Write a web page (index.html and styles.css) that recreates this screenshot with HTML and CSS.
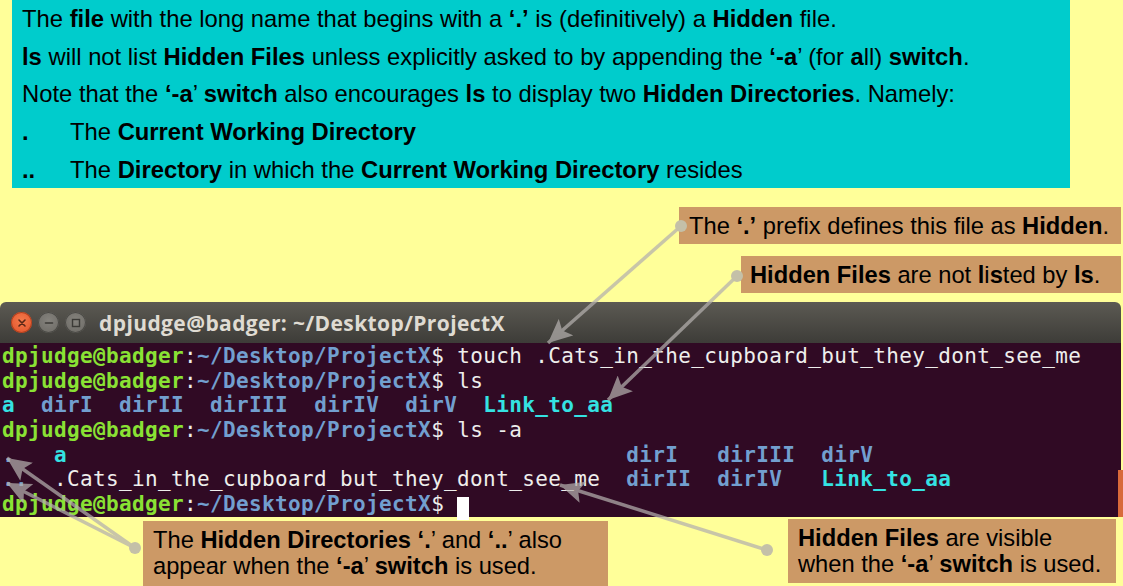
FILE: index.html
```html
<!DOCTYPE html>
<html>
<head>
<meta charset="utf-8">
<link rel="stylesheet" href="styles.css">
</head>
<body>
<div class="page">
  <section class="notes">
    <p>The <b>file</b> with the long name that begins with a <b>‘.’</b> is (definitively) a <b>Hidden</b> file.</p>
    <p><b>ls</b> will not list <b>Hidden Files</b> unless explicitly asked to by appending the <b>‘-a</b>’ (for <b>a</b>ll) <b>switch</b>.</p>
    <p>Note that the <b>‘-a</b>’ <b>switch</b> also encourages <b>ls</b> to display two <b>Hidden Directories</b>. Namely:</p>
    <p class="item"><b class="mark">.</b><span>The <b>Current Working Directory</b></span></p>
    <p class="item"><b class="mark">..</b><span>The <b>Directory</b> in which the <b>Current Working Directory</b> resides</span></p>
  </section>

  <div class="top-callouts">
    <div class="callout c1">The <b>‘.’</b> prefix defines this file as <b>Hidden</b>.</div>
    <div class="callout c2"><b>Hidden Files</b> are not <b>l</b>i<b>s</b>ted by <b>ls</b>.</div>
  </div>

  <div class="terminal">
    <div class="titlebar">
      <div class="buttons">
        <span class="btn close"><svg width="10" height="10" viewBox="0 0 10 10"><path d="M2 2L8 8M8 2L2 8" stroke="#5a2616" stroke-width="1.6" stroke-linecap="round"/></svg></span>
        <span class="btn"><svg width="10" height="10" viewBox="0 0 10 10"><path d="M1.5 5H8.5" stroke="#3b3a36" stroke-width="1.6" stroke-linecap="round"/></svg></span>
        <span class="btn"><svg width="10" height="10" viewBox="0 0 10 10"><rect x="1.5" y="1.5" width="7" height="7" fill="none" stroke="#3b3a36" stroke-width="1.4"/></svg></span>
      </div>
      <div class="title">dpjudge@badger: ~/Desktop/ProjectX</div>
    </div>
    <div class="screen">
      <div class="ln"><span class="u">dpjudge@badger</span>:<span class="d">~/Desktop/ProjectX</span>$ touch .Cats_in_the_cupboard_but_they_dont_see_me</div>
      <div class="ln"><span class="u">dpjudge@badger</span>:<span class="d">~/Desktop/ProjectX</span>$ ls</div>
      <div class="ln"><span class="l">a</span>  <span class="d">dirI</span>  <span class="d">dirII</span>  <span class="d">dirIII</span>  <span class="d">dirIV</span>  <span class="d">dirV</span>  <span class="l">Link_to_aa</span></div>
      <div class="ln"><span class="u">dpjudge@badger</span>:<span class="d">~/Desktop/ProjectX</span>$ ls -a</div>
      <div class="ln"><span class="d">.</span>   <span class="l">a</span>                                           <span class="d">dirI</span>   <span class="d">dirIII</span>  <span class="d">dirV</span></div>
      <div class="ln"><span class="d">..</span>  .Cats_in_the_cupboard_but_they_dont_see_me  <span class="d">dirII</span>  <span class="d">dirIV</span>   <span class="l">Link_to_aa</span></div>
      <div class="ln"><span class="u">dpjudge@badger</span>:<span class="d">~/Desktop/ProjectX</span>$ <span class="cursor"> </span></div>
    </div>
    <div class="scrollmark"></div>
  </div>

  <div class="bottom-callouts">
    <div class="callout c3">The <b>Hidden Directories</b> <b>‘.</b>’ and <b>‘..</b>’ also<br>appear when the <b>‘-a</b>’ <b>switch</b> is used.</div>
    <div class="callout c4"><b>Hidden Files</b> are visible<br>when the <b>‘-a</b>’ <b>switch</b> is used.</div>
  </div>

  <svg class="arrows" width="1123" height="586" viewBox="0 0 1123 586">
    <defs>
      <marker id="ah" markerUnits="userSpaceOnUse" markerWidth="26" markerHeight="22" refX="24" refY="11" orient="auto">
        <path d="M0 0L24 11L0 22L5 11Z" fill="#b4b0ae"/>
      </marker>
    </defs>
    <g stroke="#b4b0ae" stroke-width="3.5" fill="none" opacity="0.72">
      <line x1="681" y1="226" x2="548" y2="343" marker-end="url(#ah)"/>
      <line x1="737" y1="276" x2="608" y2="400" marker-end="url(#ah)"/>
      <line x1="135" y1="548" x2="7" y2="458" marker-end="url(#ah)"/>
      <line x1="135" y1="548" x2="7" y2="483" marker-end="url(#ah)"/>
      <line x1="767" y1="550" x2="560" y2="485" marker-end="url(#ah)"/>
    </g>
    <g fill="#c4c0a8">
      <circle cx="681" cy="226" r="6"/>
      <circle cx="737" cy="276" r="6"/>
      <circle cx="135" cy="548" r="6"/>
      <circle cx="767" cy="550" r="6"/>
    </g>
  </svg>
</div>
</body>
</html>
```

FILE: styles.css
```css
html, body {
  margin: 0;
  padding: 0;
}
body {
  background: #ffff99;
  font-family: "Liberation Sans", Arial, sans-serif;
  color: #000;
}
.page {
  position: relative;
  width: 1123px;
  height: 586px;
  overflow: hidden;
  display: flex;
  flex-direction: column;
}
.notes {
  margin-left: 12px;
  width: 1058px;
  height: 188px;
  box-sizing: border-box;
  background: #00cccc;
  padding: 0 10px;
  font-size: 23.8px;
}
.notes p {
  margin: 0;
  line-height: 37.7px;
  white-space: nowrap;
}
.notes .item {
  display: flex;
}
.notes .mark {
  width: 48px;
  flex: none;
}
.top-callouts {
  display: flex;
  flex-direction: column;
  align-items: flex-end;
  padding-right: 2px;
  margin-top: 19px;
  gap: 12px;
}
.callout {
  background: #cc9966;
  font-size: 23.7px;
  line-height: 26px;
  white-space: nowrap;
  box-sizing: border-box;
}
.c1 {
  width: 442px;
  height: 37px;
  padding: 6px 0 0 10px;
}
.c2 {
  width: 380px;
  height: 37px;
  padding: 6px 0 0 9px;
}
.terminal {
  position: relative;
  margin-top: 9px;
  width: 1121px;
  height: 215px;
  display: flex;
  flex-direction: column;
}
.titlebar {
  height: 41px;
  flex: none;
  border-radius: 6px 6px 0 0;
  background: linear-gradient(#5c5a53, #3d3c38);
  display: flex;
  align-items: center;
  padding-left: 11px;
}
.buttons {
  display: flex;
  gap: 6px;
}
.btn {
  width: 21px;
  height: 21px;
  border-radius: 50%;
  background: radial-gradient(circle at 50% 40%, #85837d, #6a6863);
  display: flex;
  align-items: center;
  justify-content: center;
  box-shadow: inset 0 0 0 1px #4a4945;
}
.btn.close {
  background: radial-gradient(circle at 50% 40%, #f47a4a, #e0502a);
  box-shadow: inset 0 0 0 1px #b0401e;
}
.title {
  margin-left: 13px;
  color: #dfdbd2;
  font-family: "Open Sans", "DejaVu Sans", sans-serif;
  font-weight: 700;
  font-size: 21px;
  letter-spacing: 0.4px;
}
.screen {
  flex: 1;
  background: #300a24;
  padding: 1px 0 0 2px;
  font-family: "DejaVu Sans Mono", monospace;
  font-size: 21px;
  letter-spacing: 0.36px;
  color: #eeeeec;
}
.ln {
  height: 24.7px;
  line-height: 24.7px;
  white-space: pre;
}
.u {
  color: #8ae234;
  font-weight: bold;
}
.d {
  color: #729fcf;
  font-weight: bold;
}
.l {
  color: #34e2e2;
  font-weight: bold;
}
.cursor {
  display: inline-block;
  width: 12px;
  height: 23px;
  background: #ffffff;
  vertical-align: -5px;
}
.scrollmark {
  position: absolute;
  right: -2px;
  bottom: 0;
  width: 5px;
  height: 47px;
  background: #d86a3a;
}
.bottom-callouts {
  display: flex;
  align-items: flex-start;
  padding-left: 143px;
  gap: 180px;
}
.c3 {
  width: 465px;
  height: 65px;
  margin-top: 4px;
  padding: 6px 0 0 10px;
}
.c4 {
  width: 328px;
  height: 64px;
  margin-top: 2px;
  padding: 6px 0 0 10px;
}
.arrows {
  position: absolute;
  left: 0;
  top: 0;
  pointer-events: none;
}
```
